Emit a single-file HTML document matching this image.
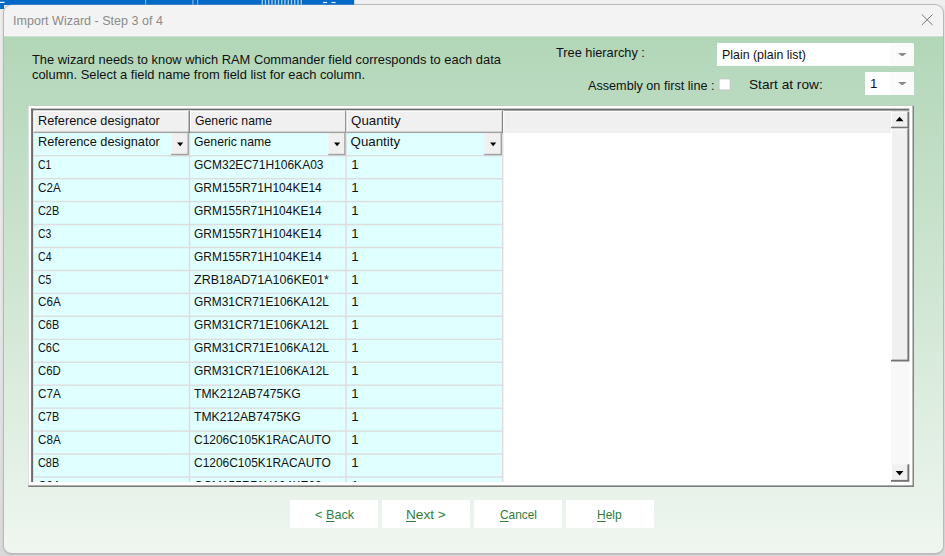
<!DOCTYPE html>
<html><head><meta charset="utf-8"><title>Import Wizard - Step 3 of 4</title>
<style>
html,body{margin:0;padding:0;}
body{width:945px;height:556px;overflow:hidden;position:relative;background:#e4e4e4;font-family:"Liberation Sans",sans-serif;}
.abs,.t{position:absolute;}
.t{white-space:nowrap;display:inline-block;transform-origin:0 0;}
#bg{left:0;top:0;width:945px;height:556px;background:linear-gradient(#ececec 0,#e6e6e6 60%,#d9d9d9 100%);}
#bluebar{left:0;top:0;width:354px;height:5px;background:#0569c8;}
#blueleft{left:0;top:0;width:4px;height:9px;background:#0569c8;}
#topstrip{left:354px;top:0;width:591px;height:5px;background:#f0f0f0;}
#win{left:4.3px;top:5px;width:939px;height:547.7px;border-radius:8px;background:#f3f3f3;box-shadow:0 0 0 1px #b9b9b9, 0 1px 3px rgba(0,0,0,.25);overflow:hidden;}
#body{left:0;top:31.3px;width:939px;height:516px;background:linear-gradient(#b2d6b8 0,#eff6f0 100%);}
.sel{background:#fff;}
.btn{background:#fff;top:499.5px;height:28.2px;width:87.8px;}
#grid{left:28.3px;top:105.8px;width:884px;height:379.5px;background:#fff;border-right:1.5px solid #767676;border-bottom:1.5px solid #767676;}
</style></head><body>
<div class="abs" id="bg"></div>
<div class="abs" id="topstrip"></div>
<div class="abs" id="bluebar"></div>
<div class="abs" id="blueleft"></div>
<div class="abs" id="win"><div class="abs" id="body"></div></div>

<svg class="abs" style="left:921px;top:14px" width="12" height="12" viewBox="0 0 12 12"><path d="M0.8 0.5 L11.5 11 M11.5 0.5 L0.8 11" stroke="#777" stroke-width="1" fill="none"/></svg>
<span class="t" style="left:13.0px;top:14.00px;font-size:12.6px;line-height:14px;color:#8b8b8b;transform:scaleX(0.9961);">Import Wizard - Step 3 of 4</span>
<span class="t" style="left:31.8px;top:52.00px;font-size:13.3px;line-height:15px;color:#111;transform:scaleX(0.9686);">The wizard needs to know which RAM Commander field corresponds to each data</span>
<span class="t" style="left:31.8px;top:67.00px;font-size:13.3px;line-height:15px;color:#111;transform:scaleX(0.9690);">column. Select a field name from field list for each column.</span>
<span class="t" style="left:555.5px;top:45.00px;font-size:13.3px;line-height:15px;color:#111;transform:scaleX(0.9598);">Tree hierarchy :</span>
<span class="t" style="left:588.3px;top:78.00px;font-size:13.3px;line-height:15px;color:#111;transform:scaleX(0.9510);">Assembly on first line :</span>
<span class="t" style="left:748.7px;top:77.00px;font-size:13.3px;line-height:15px;color:#111;transform:scaleX(1.0281);">Start at row:</span>
<div class="abs sel" style="left:717px;top:42.8px;width:197.2px;height:22.9px"></div>
<div class="abs" style="left:890px;top:42.8px;width:24.2px;height:22.9px;background:#fbfbfb"></div>
<div class="abs sel" style="left:864.5px;top:72px;width:49.7px;height:22.9px"></div>
<div class="abs" style="left:890px;top:72px;width:24.2px;height:22.9px;background:#fbfbfb"></div>
<svg class="abs" style="left:898px;top:52.5px" width="8.6" height="3.6" viewBox="0 0 8.6 3.6"><path d="M0 0 H8.6 L4.3 3.6 Z" fill="#8a8a8a"/></svg>
<svg class="abs" style="left:898px;top:81.7px" width="8.6" height="3.6" viewBox="0 0 8.6 3.6"><path d="M0 0 H8.6 L4.3 3.6 Z" fill="#8a8a8a"/></svg>
<span class="t" style="left:722.2px;top:47.00px;font-size:13.3px;line-height:15px;color:#111;transform:scaleX(0.9316);">Plain (plain list)</span>
<span class="t" style="left:870.0px;top:76.00px;font-size:13.3px;line-height:15px;color:#111;">1</span>
<svg class="abs" style="left:0;top:0" width="945" height="556" viewBox="0 0 945 556"><rect x="0.00" y="0.00" width="354.20" height="4.70" fill="#0569c8"/><rect x="4.80" y="35.20" width="938.20" height="1.15" fill="#f8f5f8"/><rect x="0.00" y="1.80" width="4.60" height="1.20" fill="#fff"/><rect x="145.20" y="0.00" width="1.00" height="4.70" fill="#8fc0ec"/><rect x="192.40" y="0.00" width="1.00" height="4.70" fill="#8fc0ec"/><rect x="197.20" y="0.00" width="1.00" height="4.70" fill="#8fc0ec"/><rect x="261.60" y="0.00" width="1.30" height="4.70" fill="#a6d0f3"/><rect x="264.85" y="0.00" width="1.30" height="4.70" fill="#a6d0f3"/><rect x="268.10" y="0.00" width="1.30" height="4.70" fill="#a6d0f3"/><rect x="271.35" y="0.00" width="1.30" height="4.70" fill="#a6d0f3"/><rect x="274.60" y="0.00" width="1.30" height="4.70" fill="#a6d0f3"/><rect x="277.85" y="0.00" width="1.30" height="4.70" fill="#a6d0f3"/><rect x="281.10" y="0.00" width="1.30" height="4.70" fill="#a6d0f3"/><rect x="284.35" y="0.00" width="1.30" height="4.70" fill="#a6d0f3"/><rect x="287.60" y="0.00" width="1.30" height="4.70" fill="#a6d0f3"/><rect x="290.85" y="0.00" width="1.30" height="4.70" fill="#a6d0f3"/><rect x="294.10" y="0.00" width="1.30" height="4.70" fill="#a6d0f3"/><rect x="297.35" y="0.00" width="1.30" height="4.70" fill="#a6d0f3"/><rect x="300.60" y="0.00" width="1.30" height="4.70" fill="#a6d0f3"/><rect x="323.00" y="1.90" width="4.20" height="1.20" fill="#e4f1fb"/><rect x="331.40" y="1.90" width="4.20" height="1.20" fill="#e4f1fb"/><rect x="718.60" y="78.40" width="12.10" height="12.00" fill="#c3c8c4"/><rect x="719.60" y="79.40" width="10.10" height="10.00" fill="#fff"/><rect x="28.30" y="105.80" width="885.60" height="381.20" fill="#7a7a7a"/><rect x="28.30" y="105.80" width="884.20" height="379.60" fill="#fff"/><rect x="31.10" y="108.60" width="2.20" height="373.40" fill="#6b6b6b"/><rect x="31.10" y="108.60" width="878.20" height="2.00" fill="#6b6b6b"/><rect x="34.40" y="111.60" width="856.60" height="21.30" fill="#f0f0f0"/><rect x="33.60" y="133.00" width="468.80" height="349.00" fill="#e0ffff"/><rect x="33.60" y="154.95" width="469.60" height="1.50" fill="#dddfdf"/><rect x="33.60" y="177.90" width="469.60" height="1.50" fill="#dddfdf"/><rect x="33.60" y="200.85" width="469.60" height="1.50" fill="#dddfdf"/><rect x="33.60" y="223.80" width="469.60" height="1.50" fill="#dddfdf"/><rect x="33.60" y="246.75" width="469.60" height="1.50" fill="#dddfdf"/><rect x="33.60" y="269.70" width="469.60" height="1.50" fill="#dddfdf"/><rect x="33.60" y="292.65" width="469.60" height="1.50" fill="#dddfdf"/><rect x="33.60" y="315.60" width="469.60" height="1.50" fill="#dddfdf"/><rect x="33.60" y="338.55" width="469.60" height="1.50" fill="#dddfdf"/><rect x="33.60" y="361.50" width="469.60" height="1.50" fill="#dddfdf"/><rect x="33.60" y="384.45" width="469.60" height="1.50" fill="#dddfdf"/><rect x="33.60" y="407.40" width="469.60" height="1.50" fill="#dddfdf"/><rect x="33.60" y="430.35" width="469.60" height="1.50" fill="#dddfdf"/><rect x="33.60" y="453.30" width="469.60" height="1.50" fill="#dddfdf"/><rect x="33.60" y="476.25" width="469.60" height="1.50" fill="#dddfdf"/><rect x="188.75" y="133.00" width="1.50" height="349.00" fill="#dddfdf"/><rect x="345.35" y="133.00" width="1.50" height="349.00" fill="#dddfdf"/><rect x="501.95" y="133.00" width="1.50" height="349.00" fill="#dddfdf"/><rect x="33.60" y="110.60" width="156.40" height="22.50" fill="#f0f0f0"/><rect x="33.60" y="110.60" width="156.40" height="1.00" fill="#fff"/><rect x="33.60" y="110.60" width="1.00" height="22.50" fill="#fff"/><rect x="33.60" y="131.60" width="156.40" height="1.50" fill="#a2a2a2"/><rect x="188.55" y="110.60" width="1.45" height="22.50" fill="#868686"/><rect x="190.00" y="110.60" width="156.60" height="22.50" fill="#f0f0f0"/><rect x="190.00" y="110.60" width="156.60" height="1.00" fill="#fff"/><rect x="190.00" y="110.60" width="1.00" height="22.50" fill="#fff"/><rect x="190.00" y="131.60" width="156.60" height="1.50" fill="#a2a2a2"/><rect x="345.15" y="110.60" width="1.45" height="22.50" fill="#868686"/><rect x="346.60" y="110.60" width="156.60" height="22.50" fill="#f0f0f0"/><rect x="346.60" y="110.60" width="156.60" height="1.00" fill="#fff"/><rect x="346.60" y="110.60" width="1.00" height="22.50" fill="#fff"/><rect x="346.60" y="131.60" width="156.60" height="1.50" fill="#a2a2a2"/><rect x="501.75" y="110.60" width="1.45" height="22.50" fill="#868686"/><rect x="503.20" y="110.60" width="1.00" height="22.30" fill="#fff"/><rect x="171.00" y="133.10" width="17.90" height="22.10" fill="#a2a2a2"/><rect x="171.00" y="133.10" width="16.50" height="20.70" fill="#f0f0f0"/><rect x="171.00" y="133.10" width="0.80" height="20.70" fill="#f8f8f8"/><path d="M177.05 142.5 H183.25 L180.15 146.3 Z" fill="#000"/><rect x="328.20" y="133.10" width="17.40" height="22.10" fill="#a2a2a2"/><rect x="328.20" y="133.10" width="16.00" height="20.70" fill="#f0f0f0"/><rect x="328.20" y="133.10" width="0.80" height="20.70" fill="#f8f8f8"/><path d="M334.00 142.5 H340.20 L337.10 146.3 Z" fill="#000"/><rect x="483.90" y="133.10" width="18.10" height="22.10" fill="#a2a2a2"/><rect x="483.90" y="133.10" width="16.70" height="20.70" fill="#f0f0f0"/><rect x="483.90" y="133.10" width="0.80" height="20.70" fill="#f8f8f8"/><path d="M490.05 142.5 H496.25 L493.15 146.3 Z" fill="#000"/><rect x="891.00" y="111.60" width="18.30" height="370.20" fill="#f8f8f8"/><rect x="891.00" y="111.60" width="18.30" height="17.00" fill="#747474"/><rect x="891.00" y="111.60" width="16.40" height="15.10" fill="#f0f0f0"/><rect x="891.00" y="111.60" width="1.00" height="15.10" fill="#fff"/><rect x="891.00" y="111.60" width="16.40" height="0.90" fill="#fff"/><rect x="891.00" y="128.60" width="18.30" height="232.90" fill="#747474"/><rect x="891.00" y="128.60" width="16.40" height="231.00" fill="#f0f0f0"/><rect x="891.00" y="128.60" width="1.00" height="231.00" fill="#fff"/><rect x="891.00" y="128.60" width="16.40" height="0.90" fill="#fff"/><rect x="891.00" y="464.30" width="18.30" height="17.50" fill="#747474"/><rect x="891.00" y="464.30" width="16.40" height="15.60" fill="#f0f0f0"/><rect x="891.00" y="464.30" width="1.00" height="15.60" fill="#fff"/><rect x="891.00" y="464.30" width="16.40" height="0.90" fill="#fff"/><path d="M895.7 121.3 H903.5 L899.6 116.8 Z" fill="#000"/><path d="M895.7 471.0 H903.5 L899.6 475.6 Z" fill="#000"/></svg>
<span class="t" style="left:38.1px;top:113.00px;font-size:13.3px;line-height:15px;color:#111;transform:scaleX(0.9580);">Reference designator</span>
<span class="t" style="left:37.6px;top:134.00px;font-size:13.3px;line-height:15px;color:#111;transform:scaleX(0.9580);">Reference designator</span>
<span class="t" style="left:194.5px;top:113.00px;font-size:13.3px;line-height:15px;color:#111;transform:scaleX(0.9220);">Generic name</span>
<span class="t" style="left:194.0px;top:134.00px;font-size:13.3px;line-height:15px;color:#111;transform:scaleX(0.9220);">Generic name</span>
<span class="t" style="left:351.1px;top:113.00px;font-size:13.3px;line-height:15px;color:#111;">Quantity</span>
<span class="t" style="left:350.6px;top:134.00px;font-size:13.3px;line-height:15px;color:#111;">Quantity</span>
<div class="abs" style="left:33.6px;top:156px;width:469px;height:326px;overflow:hidden">
<span class="t" style="left:4.0px;top:1.00px;font-size:13.3px;line-height:15px;color:#111;transform:scaleX(0.7824);">C1</span>
<span class="t" style="left:160.4px;top:1.00px;font-size:13.3px;line-height:15px;color:#111;transform:scaleX(0.9031);">GCM32EC71H106KA03</span>
<span class="t" style="left:317.6px;top:1.00px;font-size:13.3px;line-height:15px;color:#111;">1</span>
<span class="t" style="left:4.0px;top:24.00px;font-size:13.3px;line-height:15px;color:#111;transform:scaleX(0.8773);">C2A</span>
<span class="t" style="left:160.4px;top:24.00px;font-size:13.3px;line-height:15px;color:#111;transform:scaleX(0.8998);">GRM155R71H104KE14</span>
<span class="t" style="left:317.6px;top:24.00px;font-size:13.3px;line-height:15px;color:#111;">1</span>
<span class="t" style="left:4.0px;top:47.00px;font-size:13.3px;line-height:15px;color:#111;transform:scaleX(0.8193);">C2B</span>
<span class="t" style="left:160.4px;top:47.00px;font-size:13.3px;line-height:15px;color:#111;transform:scaleX(0.8998);">GRM155R71H104KE14</span>
<span class="t" style="left:317.6px;top:47.00px;font-size:13.3px;line-height:15px;color:#111;">1</span>
<span class="t" style="left:4.0px;top:70.00px;font-size:13.3px;line-height:15px;color:#111;transform:scaleX(0.7824);">C3</span>
<span class="t" style="left:160.4px;top:70.00px;font-size:13.3px;line-height:15px;color:#111;transform:scaleX(0.8998);">GRM155R71H104KE14</span>
<span class="t" style="left:317.6px;top:70.00px;font-size:13.3px;line-height:15px;color:#111;">1</span>
<span class="t" style="left:4.0px;top:93.00px;font-size:13.3px;line-height:15px;color:#111;transform:scaleX(0.7941);">C4</span>
<span class="t" style="left:160.4px;top:93.00px;font-size:13.3px;line-height:15px;color:#111;transform:scaleX(0.8998);">GRM155R71H104KE14</span>
<span class="t" style="left:317.6px;top:93.00px;font-size:13.3px;line-height:15px;color:#111;">1</span>
<span class="t" style="left:4.0px;top:116.00px;font-size:13.3px;line-height:15px;color:#111;transform:scaleX(0.7824);">C5</span>
<span class="t" style="left:160.4px;top:116.00px;font-size:13.3px;line-height:15px;color:#111;transform:scaleX(0.9407);">ZRB18AD71A106KE01*</span>
<span class="t" style="left:317.6px;top:116.00px;font-size:13.3px;line-height:15px;color:#111;">1</span>
<span class="t" style="left:4.0px;top:138.00px;font-size:13.3px;line-height:15px;color:#111;transform:scaleX(0.8773);">C6A</span>
<span class="t" style="left:160.4px;top:138.00px;font-size:13.3px;line-height:15px;color:#111;transform:scaleX(0.8946);">GRM31CR71E106KA12L</span>
<span class="t" style="left:317.6px;top:138.00px;font-size:13.3px;line-height:15px;color:#111;">1</span>
<span class="t" style="left:4.0px;top:161.00px;font-size:13.3px;line-height:15px;color:#111;transform:scaleX(0.8193);">C6B</span>
<span class="t" style="left:160.4px;top:161.00px;font-size:13.3px;line-height:15px;color:#111;transform:scaleX(0.8946);">GRM31CR71E106KA12L</span>
<span class="t" style="left:317.6px;top:161.00px;font-size:13.3px;line-height:15px;color:#111;">1</span>
<span class="t" style="left:4.0px;top:184.00px;font-size:13.3px;line-height:15px;color:#111;transform:scaleX(0.8193);">C6C</span>
<span class="t" style="left:160.4px;top:184.00px;font-size:13.3px;line-height:15px;color:#111;transform:scaleX(0.8946);">GRM31CR71E106KA12L</span>
<span class="t" style="left:317.6px;top:184.00px;font-size:13.3px;line-height:15px;color:#111;">1</span>
<span class="t" style="left:4.0px;top:207.00px;font-size:13.3px;line-height:15px;color:#111;transform:scaleX(0.8531);">C6D</span>
<span class="t" style="left:160.4px;top:207.00px;font-size:13.3px;line-height:15px;color:#111;transform:scaleX(0.8946);">GRM31CR71E106KA12L</span>
<span class="t" style="left:317.6px;top:207.00px;font-size:13.3px;line-height:15px;color:#111;">1</span>
<span class="t" style="left:4.0px;top:230.00px;font-size:13.3px;line-height:15px;color:#111;transform:scaleX(0.8773);">C7A</span>
<span class="t" style="left:160.4px;top:230.00px;font-size:13.3px;line-height:15px;color:#111;transform:scaleX(0.9144);">TMK212AB7475KG</span>
<span class="t" style="left:317.6px;top:230.00px;font-size:13.3px;line-height:15px;color:#111;">1</span>
<span class="t" style="left:4.0px;top:253.00px;font-size:13.3px;line-height:15px;color:#111;transform:scaleX(0.8193);">C7B</span>
<span class="t" style="left:160.4px;top:253.00px;font-size:13.3px;line-height:15px;color:#111;transform:scaleX(0.9144);">TMK212AB7475KG</span>
<span class="t" style="left:317.6px;top:253.00px;font-size:13.3px;line-height:15px;color:#111;">1</span>
<span class="t" style="left:4.0px;top:276.00px;font-size:13.3px;line-height:15px;color:#111;transform:scaleX(0.8773);">C8A</span>
<span class="t" style="left:160.4px;top:276.00px;font-size:13.3px;line-height:15px;color:#111;transform:scaleX(0.8992);">C1206C105K1RACAUTO</span>
<span class="t" style="left:317.6px;top:276.00px;font-size:13.3px;line-height:15px;color:#111;">1</span>
<span class="t" style="left:4.0px;top:299.00px;font-size:13.3px;line-height:15px;color:#111;transform:scaleX(0.8193);">C8B</span>
<span class="t" style="left:160.4px;top:299.00px;font-size:13.3px;line-height:15px;color:#111;transform:scaleX(0.8992);">C1206C105K1RACAUTO</span>
<span class="t" style="left:317.6px;top:299.00px;font-size:13.3px;line-height:15px;color:#111;">1</span>
<span class="t" style="left:4.0px;top:322.00px;font-size:13.3px;line-height:15px;color:#111;transform:scaleX(0.8773);">C9A</span>
<span class="t" style="left:160.4px;top:322.00px;font-size:13.3px;line-height:15px;color:#111;transform:scaleX(0.8998);">GCM155R71H104KE02</span>
<span class="t" style="left:317.6px;top:322.00px;font-size:13.3px;line-height:15px;color:#111;">1</span>
</div>
<div class="abs btn" style="left:290.2px"></div>
<div class="abs btn" style="left:382.1px"></div>
<div class="abs btn" style="left:474.2px"></div>
<div class="abs btn" style="left:565.9px"></div>
<span class="t" style="left:314.9px;top:507.00px;font-size:13.3px;line-height:15px;color:#2f7d3b;transform:scaleX(0.9526);">&lt; <span style="text-decoration:underline;text-underline-offset:1.5px">B</span>ack</span>
<span class="t" style="left:406.3px;top:507.00px;font-size:13.3px;line-height:15px;color:#2f7d3b;transform:scaleX(1.0254);"><span style="text-decoration:underline;text-underline-offset:1.5px">N</span>ext &gt;</span>
<span class="t" style="left:500.3px;top:507.00px;font-size:13.3px;line-height:15px;color:#2f7d3b;transform:scaleX(0.8936);"><span style="text-decoration:underline;text-underline-offset:1.5px">C</span>ancel</span>
<span class="t" style="left:597.0px;top:507.00px;font-size:13.3px;line-height:15px;color:#2f7d3b;transform:scaleX(0.9028);"><span style="text-decoration:underline;text-underline-offset:1.5px">H</span>elp</span>
</body></html>
